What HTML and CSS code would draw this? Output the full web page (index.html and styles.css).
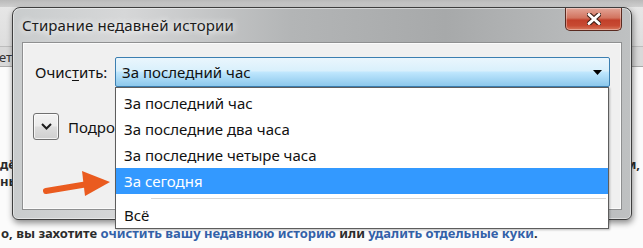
FILE: index.html
```html
<!DOCTYPE html>
<html lang="ru">
<head>
<meta charset="utf-8">
<title>Стирание недавней истории</title>
<link rel="stylesheet" href="styles.css">
</head>
<body>
<div class="page">
  <div class="topbar"></div>
  <div class="toolbar"></div>
  <div class="tabrow"><span class="tabtext">ет</span></div>
  <div class="content">
    <div class="bgline"><span>дё</span><span>м,</span></div>
    <div class="bgline"><span>ны</span></div>
    <p class="bottomline">о, вы захотите <a class="lnk">очистить вашу недавнюю историю</a> или <a class="lnk">удалить отдельные куки</a>.</p>
  </div>
</div>

<div class="window">
  <div class="titlebar">
    <span class="title">Стирание недавней истории</span>
    <div class="close">
      <svg width="14" height="12" viewBox="0 0 14 12">
        <path d="M2 1.5 L12 10.5 M12 1.5 L2 10.5" stroke="#3b1d14" stroke-width="5" stroke-linecap="round"/>
        <path d="M2 1.5 L12 10.5 M12 1.5 L2 10.5" stroke="#ffffff" stroke-width="3" stroke-linecap="round"/>
      </svg>
    </div>
  </div>
  <div class="client">
    <div class="row1">
      <span class="label">Очис<u>т</u>ить:</span>
      <div class="combo">
        <span class="combo-text">За последний час</span>
        <svg class="combo-arrow" width="9" height="5" viewBox="0 0 9 5"><path d="M0 0 H9 L4.5 5 Z" fill="#000"/></svg>
        <div class="dropdown">
          <div class="item">За последний час</div>
          <div class="item">За последние два часа</div>
          <div class="item">За последние четыре часа</div>
          <div class="item selected">За сегодня</div>
          <div class="sep"></div>
          <div class="item last">Всё</div>
        </div>
      </div>
    </div>
    <div class="row2">
      <div class="chev">
        <svg width="11" height="7" viewBox="0 0 11 7"><path d="M1 1 L5.5 5.5 L10 1" fill="none" stroke="#1c1c1c" stroke-width="2"/></svg>
      </div>
      <span class="details">Подробности</span>
    </div>
  </div>
</div>

<svg class="pointer" width="75" height="36" viewBox="40 166 75 36">
  <path d="M46 191 L88 184" stroke="#ea5b1f" stroke-width="6" stroke-linecap="round"/>
  <path d="M82 171 L110 182 L85 196 Z" fill="#ea5b1f"/>
</svg>
</body>
</html>
```

FILE: styles.css
```css
* { box-sizing: border-box; }
html, body { margin: 0; padding: 0; }
body {
  width: 643px;
  height: 248px;
  overflow: hidden;
  position: relative;
  background: #fbfbfb;
  font-family: "Noto Sans", "Open Sans", sans-serif;
}

/* background page */
.page { display: flex; flex-direction: column; }
.topbar { height: 7px; background: linear-gradient(#b9b9b9, #cfcfcf); }
.toolbar { height: 40px; background: linear-gradient(#e6e6e6, #dedede); border-bottom: 1px solid #bdbdbd; }
.tabrow {
  height: 20px;
  background: #d9d9d9;
  border-bottom: 1px solid #a9a9a9;
  display: flex;
  align-items: center;
  font-size: 13px;
  color: #333;
}
.tabtext { margin-left: -1px; }
.content { padding-top: 89px; font-size: 13px; font-weight: 700; color: #2b2b2b; }
.bgline { height: 17px; line-height: 17px; display: flex; justify-content: space-between; padding-right: 3px; }
.bottomline { margin: 37px 0 0 1px; line-height: 13px; white-space: nowrap; }
.lnk { color: #3361a8; text-decoration: none; }

/* dialog window */
.window {
  position: absolute;
  left: 12px;
  top: 7px;
  width: 620px;
  height: 213px;
  border: 1px solid #3e3e3e;
  border-radius: 8px 8px 6px 6px;
  background: linear-gradient(90deg, #c9cccd 0%, #d6d7d8 18%, #b3b5b6 45%, #a7a9aa 70%, #bfc1c2 100%);
  box-shadow: inset 0 0 0 1px rgba(255,255,255,0.45), 1px 3px 6px rgba(0,0,0,0.45);
  display: flex;
  flex-direction: column;
}
.titlebar {
  height: 34px;
  flex: 0 0 34px;
  display: flex;
  align-items: center;
}
.title {
  margin-left: 9px;
  font-size: 15px;
  letter-spacing: 0.15px;
  color: #1b1b1b;
  text-shadow: 0 0 6px rgba(255,255,255,0.95), 0 0 10px rgba(255,255,255,0.8);
}
.close {
  align-self: flex-start;
  margin-left: auto;
  margin-right: 9px;
  width: 57px;
  height: 23px;
  border: 1px solid #5a2a20;
  border-top: none;
  border-radius: 0 0 5px 5px;
  background: linear-gradient(#e3a597 0%, #d2745f 45%, #c2402a 55%, #c74a32 80%, #d97a5e 100%);
  box-shadow: inset 0 0 0 1px rgba(255,255,255,0.35);
  display: flex;
  align-items: center;
  justify-content: center;
}

.client {
  flex: 0 0 168px;
  margin: 0 9px;
  background: #f0f0f0;
  border: 1px solid #8f9091;
  box-shadow: inset 0 0 0 1px #fbfbfb;
  font-size: 15px;
  color: #111;
  display: flex;
  flex-direction: column;
}
.row1 {
  display: flex;
  align-items: center;
  padding: 14px 11px 0 12px;
}
.label { flex: 0 0 80px; }
.label u { text-underline-offset: 2px; }
.combo {
  position: relative;
  flex: 1;
  height: 30px;
  border: 1px solid #3c7fb1;
  border-radius: 2px;
  background: linear-gradient(#eaf6fd 0%, #d9f0fc 45%, #bee6fd 52%, #8cc8ec 100%);
  display: flex;
  align-items: center;
  padding: 0 7px 0 6px;
}
.combo-text { flex: 1; }
.combo-arrow { display: block; }

.dropdown {
  position: absolute;
  left: -1px;
  right: 0;
  top: calc(100% + 1px);
  background: #fff;
  border: 1px solid #5d5d5d;
  padding: 2px 0 1px;
  z-index: 5;
  box-shadow: 1px 1px 2px rgba(0,0,0,0.25);
}
.item {
  height: 26px;
  line-height: 26px;
  padding-left: 8px;
  color: #111;
}
.item.selected { background: #3399ff; color: #fff; }
.item.last { height: 24px; line-height: 24px; }
.sep {
  height: 9px;
  margin: 0 2px 0 35px;
  position: relative;
}
.sep::after {
  content: "";
  position: absolute;
  left: 0; right: 0; top: 4px;
  border-top: 1px solid #d7d7d7;
}

.row2 {
  display: flex;
  align-items: center;
  margin: 26px 0 0 10px;
  gap: 9px;
}
.chev {
  width: 26px;
  height: 27px;
  border: 1px solid #707070;
  border-radius: 3px;
  background: linear-gradient(#f3f3f3 0%, #ebebeb 48%, #dddddd 52%, #cfcfcf 100%);
  box-shadow: inset 0 0 0 1px rgba(255,255,255,0.7);
  display: flex;
  align-items: center;
  justify-content: center;
}

.pointer { position: absolute; left: 40px; top: 166px; }
```
